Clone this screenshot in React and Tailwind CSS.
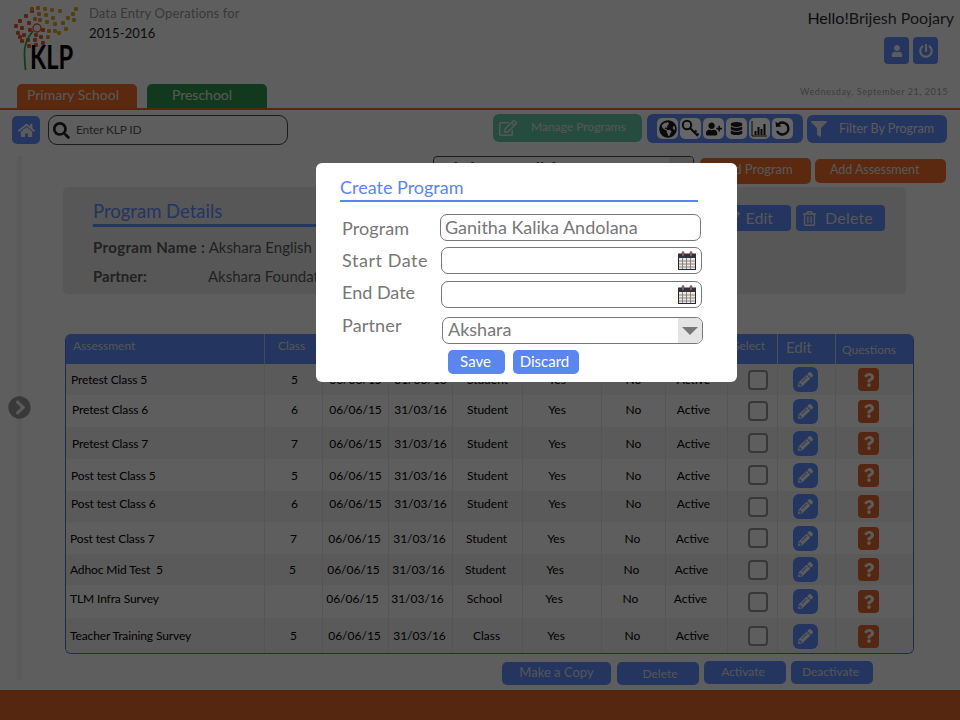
import React from "react";
import { FaHome, FaSearch, FaUser, FaPowerOff, FaRegEdit, FaFilter, FaGlobeAmericas, FaUserPlus, FaDatabase, FaPencilAlt, FaQuestion, FaChevronCircleRight, FaEdit, FaRegTrashAlt } from "react-icons/fa";

const rows = [
  { name: "Pretest Class 5", c: "5", t: "Student", h: "h-[31px]", nm: "ml-[5px]", sh: "", up: "" },
  { name: "Pretest Class 6", c: "6", t: "Student", h: "h-[32px]", nm: "ml-[6px]", sh: "", up: "mb-[2px]" },
  { name: "Pretest Class 7", c: "7", t: "Student", h: "h-[32px]", nm: "ml-[6px]", sh: "", up: "mt-[2px]" },
  { name: "Post test Class 5", c: "5", t: "Student", h: "h-[32px]", nm: "ml-[5px]", sh: "", up: "mt-[2px]" },
  { name: "Post test Class 6", c: "6", t: "Student", h: "h-[31px]", nm: "ml-[5px]", sh: "", up: "mb-[5px]" },
  { name: "Post test Class 7", c: "7", t: "Student", h: "h-[32px]", nm: "ml-[4px]", sh: "-translate-x-[1px]", up: "mt-[2px]" },
  { name: "Adhoc Mid Test  5", c: "5", t: "Student", h: "h-[31px]", nm: "ml-[4px]", sh: "-translate-x-[2px]", up: "" },
  { name: "TLM Infra Survey", c: "", t: "School", h: "h-[33px]", nm: "ml-[4px]", sh: "-translate-x-[3px]", up: "mb-[6px]" },
  { name: "Teacher Training Survey", c: "5", t: "Class", h: "h-[36px]", nm: "ml-[4px]", sh: "-translate-x-[1px]", up: "" },
];

const cols = "grid-cols-[199px_58px_66px_64px_70px_79px_64px_62px_50px_58px_1fr]";
const cellPad = ["pl-[2px]", "", "", "", "pr-[10px]", "", "pr-[6px]"];

function Logo() {
  const dots = [
    [30,9,"#d9532b"],[24,14,"#d9532b"],[18,19,"#d9532b"],[14,24,"#d9532b"],[20,26,"#d9532b"],[27,21,"#d9532b"],[33,17,"#d98a2b"],
    [30,7,"#d98a2b"],[36,6,"#d98a2b"],[43,7,"#c9a227"],[50,8,"#c9a227"],[58,9,"#c9a227"],[37,12,"#d98a2b"],[44,13,"#c9a227"],[51,16,"#c9a227"],
    [38,18,"#d98a2b"],[45,20,"#c9a227"],[53,22,"#c9a227"],[61,21,"#c9a227"],[66,16,"#c9a227"],[71,12,"#c9a227"],[72,18,"#c9a227"],[74,7,"#c9a227"],[64,27,"#c9a227"],
    [16,31,"#d9532b"],[22,33,"#d9532b"],[28,28,"#d9532b"],[34,33,"#d9532b"],[41,28,"#d9532b"],[47,29,"#d98a2b"],[53,29,"#c9a227"],[57,31,"#c9a227"],
    [20,39,"#d9532b"],[26,38,"#d9532b"],[33,38,"#d9532b"],[39,35,"#d9532b"],[46,35,"#d98a2b"],[27,44,"#d9532b"],[34,43,"#d9532b"],[41,41,"#d9532b"],[18,35,"#d9532b"],
  ];
  return (
    <svg width="66" height="68" viewBox="12 4 66 68" className="shrink-0">
      {dots.map(([x, y, f], i) => <rect key={i} x={x} y={y} width="4" height="4" rx="1.2" fill={f} />)}
      <circle cx="37" cy="28" r="4" fill="none" stroke="#d9532b" strokeWidth="1.4" />
      <path d="M33 31 C27 38 24 45 24.500 54 C24.700 60 25 65 25.500 70" fill="none" stroke="#2f9e44" strokeWidth="1.8" />
    </svg>
  );
}

function Calendar() {
  return (
    <svg width="18" height="19" viewBox="0 0 18 19" className="shrink-0">
      <rect x="0.5" y="3" width="17" height="15.5" fill="#f5e6d0" stroke="#1d2a3a" />
      <rect x="0.5" y="3" width="17" height="4" fill="#2a3646" />
      <path d="M1 10h16M1 13h16M1 16h16M4.500 7v11M8.500 7v11M12.500 7v11" stroke="#66708a" strokeWidth="0.8" />
      <rect x="4" y="0.500" width="2" height="5" rx="1" fill="#d8603a" stroke="#1d2a3a" strokeWidth="0.5" />
      <rect x="12" y="0.500" width="2" height="5" rx="1" fill="#d8603a" stroke="#1d2a3a" strokeWidth="0.5" />
    </svg>
  );
}

function Key() {
  return (
    <svg width="19" height="19" viewBox="0 0 19 19" fill="none" stroke="#1a1a1a" strokeWidth="2">
      <circle cx="6" cy="6" r="4.200" />
      <path d="M9 9l8 8M13.500 13.500l2-2M16 16l1.500-1.500" />
    </svg>
  );
}

function Bars() {
  return (
    <svg width="17" height="17" viewBox="0 0 17 17" fill="none" stroke="#1a1a1a">
      <path d="M1 1v15h15" strokeWidth="1" />
      <path d="M4.500 15v-4M7.500 15v-8M10.500 15v-6M13.500 15v-11" strokeWidth="2" />
    </svg>
  );
}

function Undo() {
  return (
    <svg width="17" height="17" viewBox="0 0 17 17" fill="none" stroke="#1a1a1a" strokeWidth="2.400">
      <path d="M4 4.500A6 6 0 1 1 3 11" />
      <path d="M1.500 1.500l0.500 5.500 5.500-0.500z" fill="#1a1a1a" stroke="none" />
    </svg>
  );
}

function Tool({ children }) {
  return (
    <div className="w-[21px] h-[21px] rounded-[5px] bg-white flex items-center justify-center text-[#1a1a1a]">
      {children}
    </div>
  );
}

export default function App() {
  return (
    <div className="relative w-[960px] h-[720px] overflow-hidden bg-[#ececec] flex flex-col font-['Lato','Liberation_Sans',sans-serif] text-[#333]">
      {/* header */}
      <header className="h-[110px] shrink-0 flex flex-col border-b-2 border-[#d4622a]">
        <div className="flex justify-between h-[84px]">
          <div className="flex pl-[12px] pt-[4px]">
            <div className="relative w-[66px] h-[70px]">
              <Logo />
              <span className="absolute left-[18px] top-[35px] text-[32px] leading-[36px] font-bold text-black origin-left scale-x-[0.74]">KLP</span>
            </div>
            <div className="ml-[11px] -mt-[1px] text-[13px] leading-[20px] tracking-[0.13px]">
              <div className="text-[#8f8f8f]">Data Entry Operations for</div>
              <div className="text-[#222]">2015-2016</div>
            </div>
          </div>
          <div className="flex flex-col items-end pr-[6px] pt-[8px]">
            <div className="text-[16px] leading-[20px] text-[#222]">Hello!<span className="text-[#333]">Brijesh Poojary</span></div>
            <div className="flex gap-[4px] mt-[9px] mr-[16px]">
              <div className="w-[25px] h-[27px] rounded-[4px] bg-[#5b86ee] flex items-center justify-center text-[#e6e6e6]"><FaUser size={12} /></div>
              <div className="w-[25px] h-[27px] rounded-[4px] bg-[#5b86ee] flex items-center justify-center text-[#e6e6e6]"><FaPowerOff size={14} /></div>
            </div>
            <div className="text-[9px] leading-[10px] text-[#999] mt-[23px] mr-[6px] tracking-[0.58px] whitespace-nowrap">Wednesday, September 21, 2015</div>
          </div>
        </div>
        <div className="flex gap-[10px] pl-[17px] h-[24px]">
          <div className="w-[120px] rounded-t-[5px] bg-[#e0682a] text-[14px] text-[#ddd] pl-[10px] leading-[22px]">Primary School</div>
          <div className="w-[120px] rounded-t-[5px] bg-[#2f8f4a] text-[14px] text-[#ddd] text-center pr-[10px] leading-[22px]">Preschool</div>
        </div>
      </header>

      {/* toolbar */}
      <div className="flex items-start h-[46px] shrink-0 pt-[4px] pl-[12px]">
        <div className="w-[28px] h-[28px] mt-[2px] rounded-[5px] bg-[#5b86ee] flex items-center justify-center text-[#e6e6e6]"><FaHome size={17} /></div>
        <div className="ml-[8px] w-[240px] h-[30px] mt-[1px] rounded-[9px] border border-[#444] flex items-center pl-[3px] text-[#555] text-[12px] tracking-[-0.2px]">
          <FaSearch size={17} className="text-[#222] ml-[1px]" />
          <span className="ml-[6px]">Enter KLP ID</span>
        </div>
        <div className="ml-[205px] w-[149px] h-[28px] rounded-[6px] bg-[#5fbfa0] flex items-center pl-[6px] text-[#d8d8d8] text-[12px]">
          <FaRegEdit size={18} />
          <span className="ml-[14px] -mt-[2px]">Manage Programs</span>
        </div>
        <div className="ml-[5px] w-[156px] h-[29px] rounded-[6px] bg-[#5b86ee] flex items-center justify-center gap-[2px]">
          <Tool><FaGlobeAmericas size={18} /></Tool>
          <Tool><Key /></Tool>
          <Tool><FaUserPlus size={16} /></Tool>
          <Tool><FaDatabase size={13} /></Tool>
          <Tool><Bars /></Tool>
          <Tool><Undo /></Tool>
        </div>
        <div className="ml-[4px] w-[140px] h-[28px] mt-[1px] rounded-[6px] bg-[#5b86ee] flex items-center pl-[4px] text-[#e0e0e0] text-[12.500px]">
          <FaFilter size={16} />
          <span className="ml-[12px]">Filter By Program</span>
        </div>
      </div>

      {/* main */}
      <div className="relative flex-1 min-h-0 flex">
        <div className="w-[17px] shrink-0 relative">
          <FaChevronCircleRight size={23} className="absolute left-[8px] top-[240px] text-[#909090]" />
        </div>
        <div className="w-[5px] shrink-0 bg-[#e0e0e0] mb-[10px]"></div>
        <div className="flex-1 min-w-0 flex flex-col">
          <div className="h-[31px] shrink-0 flex items-start">
            <div className="ml-[411px] w-[261px] h-[30px] border border-[#444] rounded-[4px] pl-[8px] text-[17px] leading-[24px] text-[#444] flex justify-between overflow-hidden">
              <span className="font-bold">Akshara English</span>
              <div className="w-[24px] bg-[#d8d8d8]"></div>
            </div>
            <div className="ml-[6px] mt-[2px] w-[111px] h-[26px] rounded-[5px] bg-[#e0682a] text-[#ddd] text-[13px] leading-[22px] text-center">Add Program</div>
            <div className="ml-[4px] mt-[3px] w-[131px] h-[24px] rounded-[5px] bg-[#e0682a] text-[#ddd] text-[12.500px] leading-[22px] pl-[15px] tracking-[-0.05px]">Add Assessment</div>
          </div>
          <section className="ml-[41px] w-[843px] h-[107px] rounded-[5px] bg-[#d9d9d9] flex justify-between shrink-0">
            <div className="pl-[30px] w-[500px] pt-[12px]">
              <div className="text-[18.500px] leading-[24px] text-[#5b86ee] border-b-[3px] border-[#5b86ee] pb-[1px]">Program Details</div>
              <div className="mt-[10px] text-[15px] leading-[20px] text-[#555]"><b className="font-bold tracking-[0.35px]">Program Name :</b> Akshara English</div>
              <div className="mt-[9px] text-[15px] leading-[20px] text-[#555] flex"><b className="font-bold w-[115px]">Partner:</b><span>Akshara Foundation</span></div>
            </div>
            <div className="flex gap-[5px] pt-[18px] pr-[21px]">
              <div className="w-[75px] h-[26px] rounded-[4px] bg-[#5b86ee] flex items-center justify-end pr-[18px] gap-[6px] text-[#d8d8d8] text-[16px]"><FaEdit size={14} />Edit</div>
              <div className="w-[89px] h-[26px] rounded-[4px] bg-[#5b86ee] flex items-center pl-[6px] gap-[8px] text-[#d8d8d8] text-[16px] tracking-[0.2px]"><FaRegTrashAlt size={15} />Delete</div>
            </div>
          </section>

          <div className="mt-[40px] ml-[43px] w-[849px] h-[320px] shrink-0 rounded-[6px] border border-[#4a6fc4] border-t-0 overflow-hidden text-[12px] text-black">
            <div className={`grid ${cols} h-[30px] bg-[#5b86ee] text-[#d4d4d4] text-[12px]`}>
              <div className="pl-[7px] pt-[3px] border-r border-[#9fb6ee]">Assessment</div>
              <div className="pl-[13px] pt-[3px] border-r border-[#9fb6ee]">Class</div>
              <div></div><div></div><div></div><div></div><div></div><div className="border-r border-[#9fb6ee]"></div>
              <div className="pt-[3px] border-r border-[#c8c8c8] pl-[5px]">Select</div>
              <div className="text-[15px] pl-[8px] pt-[2px] border-r border-[#c8c8c8]">Edit</div>
              <div className="pl-[6px] pt-[7px] text-[12px]">Questions</div>
            </div>
            {rows.map((r, i) => (
              <div key={i} className={`grid ${cols} ${r.h} ${i % 2 ? "bg-[#ebebeb]" : "bg-[#e2e2e2]"}`}>
                <div className="flex items-center border-r border-[#d4d4d4]"><span className={`${r.nm} ${r.up} tracking-[-0.12px] whitespace-pre`}>{r.name}</span></div>
                {[r.c, "06/06/15", "31/03/16", r.t, "Yes", "No", "Active"].map((v, j) => (
                  <div key={j} className={`flex items-center justify-center border-r border-[#d4d4d4] ${cellPad[j]}`}><span className={`${r.sh} ${r.up}`}>{v}</span></div>
                ))}
                <div className="flex items-center justify-center border-r border-[#d4d4d4] pl-[10px]">
                  <div className="w-[20px] h-[20px] rounded-[4px] border-2 border-[#8c8c8c] bg-[#ebebeb]"></div>
                </div>
                <div className="flex items-center justify-center border-r border-[#d4d4d4] pr-[2px]">
                  <div className="w-[25px] h-[25px] rounded-[6px] bg-[#5b86ee] flex items-center justify-center text-[#e6e6e6]"><FaPencilAlt size={15} /></div>
                </div>
                <div className="flex items-center justify-center pr-[12px]">
                  <div className="w-[21px] h-[23px] rounded-[4px] bg-[#d4622a] flex items-center justify-center text-[#e6e6e6]"><FaQuestion size={14} /></div>
                </div>
              </div>
            ))}
          </div>

          <div className="flex pl-[480px] pt-[8px]">
            <div className="w-[109px] h-[23px] rounded-[5px] bg-[#5b86ee] text-[#d4d4d4] text-[13px] text-center leading-[20px]">Make a Copy</div>
            <div className="ml-[6px] w-[82px] h-[23px] rounded-[5px] bg-[#5b86ee] text-[#d4d4d4] text-[12px] text-center pl-[4px] leading-[24px]">Delete</div>
            <div className="ml-[5px] -mt-[1px] w-[82px] h-[23px] rounded-[5px] bg-[#5b86ee] text-[#d4d4d4] text-[12px] text-center pr-[4px] leading-[22px]">Activate</div>
            <div className="ml-[5px] -mt-[1px] w-[82px] h-[23px] rounded-[5px] bg-[#5b86ee] text-[#d4d4d4] text-[12px] text-center pr-[3px] leading-[22px]">Deactivate</div>
          </div>
        </div>
      </div>
      <footer className="h-[30px] shrink-0 bg-[#d4622a]"></footer>

      {/* overlay */}
      <div className="absolute inset-0 bg-black/60"></div>
      <div className="absolute left-[316px] top-[163px] w-[421px] h-[219px] bg-white rounded-[6px] pt-[13px] pl-[24px] text-[#777]">
        <div className="w-[358px] text-[18px] leading-[22px] text-[#5b86ee] border-b-2 border-[#5b86ee] pb-[2px]">Create Program</div>
        <div className="flex items-center mt-[12px] h-[27px]">
          <div className="w-[100px] pl-[2px] pt-[2px] text-[18px] tracking-[0.1px]">Program</div>
          <div className="w-[261px] h-[27px] rounded-[7px] border border-[#777] pl-[4px] text-[18px] leading-[25px]">Ganitha Kalika Andolana</div>
        </div>
        <div className="flex items-center mt-[6px] h-[27px]">
          <div className="w-[101px] pl-[2px] text-[18px] tracking-[0.55px]">Start Date</div>
          <div className="w-[261px] h-[27px] rounded-[7px] border border-[#777] flex justify-end items-center pr-[5px]"><Calendar /></div>
        </div>
        <div className="flex items-start mt-[7px] h-[27px]">
          <div className="w-[101px] pl-[2px] text-[18px] leading-[22px]">End Date</div>
          <div className="w-[261px] h-[27px] rounded-[7px] border border-[#777] flex justify-end items-center pr-[5px]"><Calendar /></div>
        </div>
        <div className="flex items-start mt-[9px] h-[27px]">
          <div className="w-[102px] pl-[2px] text-[18px] leading-[20px] -mt-[2px] tracking-[0.15px]">Partner</div>
          <div className="w-[261px] h-[27px] rounded-[7px] border border-[#777] pl-[5px] text-[18px] leading-[23px] flex justify-between overflow-hidden">
            <span>Akshara</span>
            <div className="w-[24px] bg-[#e4e4e4] flex items-center justify-center"><div className="w-0 h-0 border-l-[8px] border-r-[8px] border-t-[8px] border-l-transparent border-r-transparent border-t-[#777]"></div></div>
          </div>
        </div>
        <div className="flex gap-[8px] mt-[6px] pl-[108px]">
          <div className="w-[57px] h-[24px] rounded-[5px] bg-[#5b86ee] text-white text-[15px] text-center pr-[2px] leading-[23px]">Save</div>
          <div className="w-[66px] h-[24px] rounded-[5px] bg-[#5b86ee] text-white text-[15px] text-center pr-[3px] leading-[23px]">Discard</div>
        </div>
      </div>
    </div>
  );
}
